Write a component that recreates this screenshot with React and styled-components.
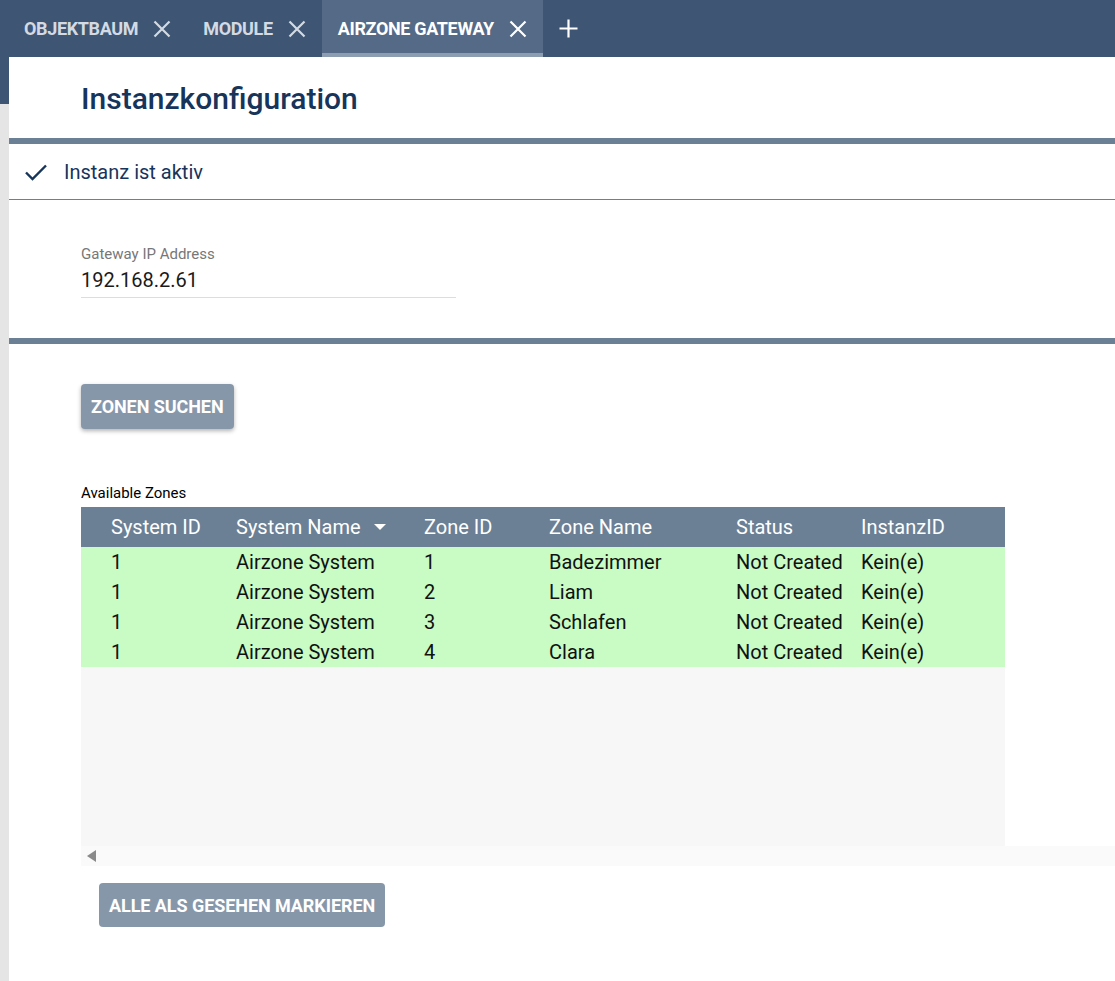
import React from "react";
import styled, { createGlobalStyle } from "styled-components";

const GlobalStyle = createGlobalStyle`
  html, body { margin: 0; padding: 0; background: #fff; }
  body { font-family: Roboto, "Liberation Sans", sans-serif; }
`;

const Page = styled.div`
  width: 1115px;
  height: 981px;
  display: flex;
  flex-direction: column;
  overflow: hidden;
`;

const TabBar = styled.div`
  height: 57px;
  background: #3e5673;
  display: flex;
  align-items: stretch;
  padding-left: 8px;
  flex-shrink: 0;
`;

const Tab = styled.div`
  display: flex;
  align-items: center;
  gap: 15px;
  padding: 0 16px;
  font-size: 18px;
  font-weight: 700;
  letter-spacing: -0.35px;
  color: ${p => (p.$active ? "#ffffff" : "#d3dae3")};
  background: ${p => (p.$active ? "#546a86" : "transparent")};
  box-shadow: ${p => (p.$active ? "inset 0 -4px 0 #8c9db1" : "none")};
  svg { display: block; }
`;

const AddTab = styled.div`
  display: flex;
  align-items: center;
  padding: 0 16px;
`;

const Body = styled.div`
  flex: 1;
  display: flex;
`;

const Side = styled.div`
  width: 9px;
  flex-shrink: 0;
  background: #e5e5e5;
  &::before {
    content: "";
    display: block;
    height: 47px;
    background: #3e5673;
  }
`;

const Main = styled.div`
  flex: 1;
  background: #fff;
  display: flex;
  flex-direction: column;
`;

const Title = styled.h1`
  margin: 0;
  height: 87px;
  padding: 24px 0 0 72px;
  box-sizing: border-box;
  font-size: 30px;
  line-height: 36px;
  font-weight: 500;
  color: #17345a;
  border-bottom: 6px solid #6b7f95;
`;

const ActiveRow = styled.div`
  height: 56px;
  box-sizing: border-box;
  display: flex;
  align-items: center;
  gap: 16px;
  padding-left: 15px;
  font-size: 20px;
  color: #17345a;
  border-bottom: 1px solid #6b7f95;
`;

const FieldSection = styled.div`
  height: 144px;
  padding: 45px 0 0 72px;
  box-sizing: border-box;
  border-bottom: 6px solid #6b7f95;
`;

const Field = styled.div`
  width: 375px;
  border-bottom: 1px solid #dddddd;
  padding-bottom: 5px;
`;

const FieldLabel = styled.div`
  font-size: 15px;
  color: #777;
  line-height: 18px;
`;

const FieldValue = styled.div`
  font-size: 20px;
  color: #1a1a1a;
  line-height: 24px;
  margin-top: 5px;
`;

const Content = styled.div`
  padding: 40px 0 0 72px;
`;

const Button = styled.button`
  display: block;
  border: none;
  border-radius: 4px;
  background: #8797aa;
  color: #fff;
  font-family: Roboto, "Liberation Sans", sans-serif;
  font-size: 18px;
  font-weight: 700;
  height: ${p => p.$h || 45}px;
  padding: 0 10px;
  letter-spacing: -0.07px;
  box-shadow: ${p => (p.$raised ? "0 2px 4px rgba(0,0,0,0.3)" : "none")};
`;

const Caption = styled.div`
  margin: 55px 0 5px;
  font-size: 15px;
  color: #000;
  line-height: 18px;
`;

const TableWrap = styled.div`
  width: 1034px;
`;

const Row = styled.div`
  width: 924px;
  box-sizing: border-box;
  padding-left: 30px;
  display: grid;
  grid-template-columns: 125px 188px 125px 187px 125px 144px;
  height: ${p => (p.$head ? 40 : 30)}px;
  background: ${p => (p.$head ? "#6b7f95" : "#c9fbc4")};
  color: ${p => (p.$head ? "#fff" : "#111")};
  font-size: 20px;
`;

const Cell = styled.div`
  display: flex;
  align-items: center;
  gap: 13px;
  white-space: nowrap;
`;

const Empty = styled.div`
  width: 924px;
  height: 179px;
  background: #f7f7f7;
`;

const ScrollBar = styled.div`
  height: 20px;
  background: #fafafa;
  display: flex;
  align-items: center;
  padding-left: 6px;
`;

const Arrow = styled.div`
  width: 0;
  height: 0;
  border-top: 6px solid transparent;
  border-bottom: 6px solid transparent;
  border-right: 9px solid #8a8a8a;
`;

const Footer = styled.div`
  padding: 17px 0 0 18px;
`;

const X = () => (
  <svg width="18" height="18" viewBox="0 0 18 18">
    <path d="M1.5 1.5L16.5 16.5M16.5 1.5L1.5 16.5" stroke="currentColor" strokeWidth="2.2" />
  </svg>
);

const Plus = () => (
  <svg width="19" height="19" viewBox="0 0 19 19">
    <path d="M9.5 0.5V18.5M0.5 9.5H18.5" stroke="#fff" strokeWidth="2.2" />
  </svg>
);

const Check = () => (
  <svg width="24" height="20" viewBox="0 0 24 20">
    <path d="M2 10.5L8.5 17L22 3.5" fill="none" stroke="#17345a" strokeWidth="2.4" />
  </svg>
);

const SortDown = () => (
  <svg width="12" height="8" viewBox="0 0 12 8">
    <path d="M0 1H12L6 7Z" fill="#fff" />
  </svg>
);

const headers = ["System ID", "System Name", "Zone ID", "Zone Name", "Status", "InstanzID"];
const zones = [
  ["1", "Airzone System", "1", "Badezimmer", "Not Created", "Kein(e)"],
  ["1", "Airzone System", "2", "Liam", "Not Created", "Kein(e)"],
  ["1", "Airzone System", "3", "Schlafen", "Not Created", "Kein(e)"],
  ["1", "Airzone System", "4", "Clara", "Not Created", "Kein(e)"],
];

export default function App() {
  return (
    <Page>
      <GlobalStyle />
      <TabBar>
        <Tab>OBJEKTBAUM <X /></Tab>
        <Tab>MODULE <X /></Tab>
        <Tab $active>AIRZONE GATEWAY <X /></Tab>
        <AddTab><Plus /></AddTab>
      </TabBar>
      <Body>
        <Side />
        <Main>
          <Title>Instanzkonfiguration</Title>
          <ActiveRow><Check />Instanz ist aktiv</ActiveRow>
          <FieldSection>
            <Field>
              <FieldLabel>Gateway IP Address</FieldLabel>
              <FieldValue>192.168.2.61</FieldValue>
            </Field>
          </FieldSection>
          <Content>
            <Button $raised>ZONEN SUCHEN</Button>
            <Caption>Available Zones</Caption>
            <TableWrap>
              <Row $head>
                {headers.map(h => (
                  <Cell key={h}>
                    {h}
                    {h === "System Name" && <SortDown />}
                  </Cell>
                ))}
              </Row>
              {zones.map((row, i) => (
                <Row key={i}>
                  {row.map((c, j) => <Cell key={j}>{c}</Cell>)}
                </Row>
              ))}
              <Empty />
              <ScrollBar><Arrow /></ScrollBar>
            </TableWrap>
            <Footer>
              <Button $h={44}>ALLE ALS GESEHEN MARKIEREN</Button>
            </Footer>
          </Content>
        </Main>
      </Body>
    </Page>
  );
}
